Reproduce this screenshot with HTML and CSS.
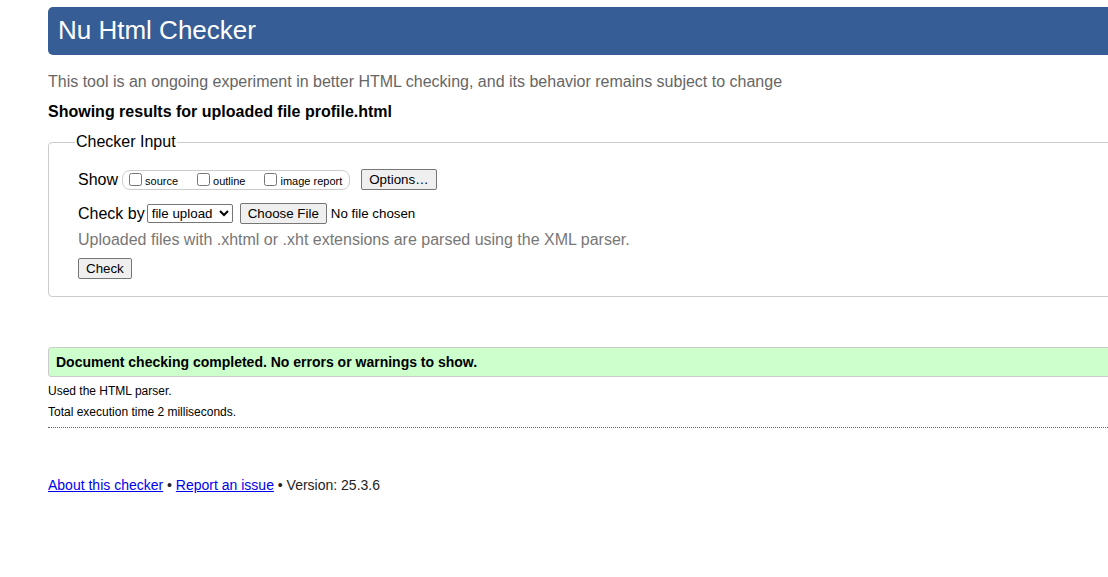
FILE: index.html
```html
<!DOCTYPE html>
<html lang="en">
<head>
<meta charset="utf-8">
<title>Showing results for uploaded file profile.html - Nu Html Checker</title>
<link rel="stylesheet" href="styles.css">
</head>
<body>
<h1 class="title">Nu Html Checker</h1>
<p class="tagline">This tool is an ongoing experiment in better HTML checking, and its behavior remains subject to change</p>
<p class="showing">Showing results for uploaded file profile.html</p>
<fieldset class="input-region">
  <legend class="legend">Checker Input</legend>
  <div class="row row-show">
    <span class="label-text">Show</span>
    <span class="show-box">
      <label class="opt"><input type="checkbox" class="cb"><span>source</span></label>
      <label class="opt"><input type="checkbox" class="cb"><span>outline</span></label>
      <label class="opt"><input type="checkbox" class="cb"><span>image report</span></label>
    </span>
    <button class="btn btn-options" type="button">Options…</button>
  </div>
  <div class="row row-check">
    <span class="label-text">Check by</span>
    <select class="select"><option>file upload</option></select>
    <button class="btn btn-file" type="button">Choose File</button>
    <span class="nofile">No file chosen</span>
  </div>
  <p class="instructions">Uploaded files with .xhtml or .xht extensions are parsed using the XML parser.</p>
  <div class="row row-submit">
    <button class="btn btn-check" type="button">Check</button>
  </div>
</fieldset>
<p class="success">Document checking completed. No errors or warnings to show.</p>
<p class="details">Used the HTML parser.</p>
<p class="details">Total execution time 2 milliseconds.</p>
<hr class="dotted">
<p class="footer"><a href="#">About this checker</a> • <a href="#">Report an issue</a> • Version: 25.3.6</p>
</body>
</html>
```
FILE: styles.css
```css
html {
  overflow: hidden;
  background: #fff;
}
body {
  margin: 0 -40px 0 48px;
  padding-top: 7px;
  font-family: "Liberation Sans", Arial, sans-serif;
  color: #000;
  font-size: 16px;
  line-height: 18px;
}
.title {
  margin: 0;
  background: #365d95;
  color: #fff;
  font-size: 26px;
  font-weight: normal;
  line-height: 30px;
  height: 30px;
  padding: 8px 10px 10px 10px;
  border-radius: 5px 0 0 5px;
}
.tagline {
  margin: 18px 0 0 0;
  color: #666;
}
.showing {
  margin: 12px 0 0 0;
  font-weight: bold;
}
.input-region {
  margin: 12px 0 0 0;
  border: 1px solid #ccc;
  border-radius: 4px 0 0 4px;
  padding: 0 0 17px 29px;
}
.legend {
  padding: 0 1px;
  margin-left: -3px;
  line-height: 18px;
}
.row {
  display: flex;
  align-items: center;
}
.row-show {
  margin-top: 18px;
  height: 21px;
}
.label-text {
  font-size: 16px;
}
.show-box {
  display: inline-flex;
  align-items: center;
  gap: 19px;
  height: 18px;
  margin-left: 4px;
  padding: 0 7px 0 6px;
  border: 1px solid #ccc;
  border-radius: 8px;
}
.opt {
  display: inline-flex;
  align-items: flex-end;
  gap: 3px;
  font-size: 11px;
  line-height: 13px;
}
.opt span {
  position: relative;
  top: 2px;
}
.cb {
  margin: 0;
  width: 13px;
  height: 13px;
}
.btn {
  font-family: "Liberation Sans", Arial, sans-serif;
  font-size: 13.333px;
  line-height: 15px;
  height: 21px;
  padding: 0 7px;
  background: #efefef;
  color: #000;
  border: 1px solid #767676;
  border-radius: 2px;
  box-sizing: border-box;
}
.btn-options {
  margin-left: 11px;
}
.row-check {
  margin-top: 13px;
  height: 21px;
}
.select {
  margin-left: 2px;
  width: 86px;
  height: 19px;
  font-family: "Liberation Sans", Arial, sans-serif;
  font-size: 13.333px;
  padding: 0;
  border: 1px solid #767676;
  border-radius: 2px;
  background: #fff;
  color: #000;
}
.btn-file {
  margin-left: 7px;
}
.nofile {
  margin-left: 4px;
  font-size: 13.333px;
}
.instructions {
  margin: 7px 0 0 0;
  color: #777;
}
.row-submit {
  margin-top: 9px;
}
.success {
  margin: 50px 0 0 0;
  height: 28px;
  line-height: 28px;
  padding: 0 0 0 7px;
  background: #ccffcc;
  border: 1px solid #ccc;
  border-radius: 3px 0 0 3px;
  font-size: 14px;
  font-weight: bold;
}
.details {
  margin: 7px 0 0 0;
  font-size: 12px;
  line-height: 14px;
}
.details + .details {
  margin-top: 7px;
}
.dotted {
  margin: 8px 0 0 0;
  border: 0;
  border-top: 1px dotted #666;
  height: 0;
}
.footer {
  margin: 49px 0 0 0;
  font-size: 14px;
  line-height: 16px;
  color: #222;
}
.footer a {
  color: #0000ee;
}
```
